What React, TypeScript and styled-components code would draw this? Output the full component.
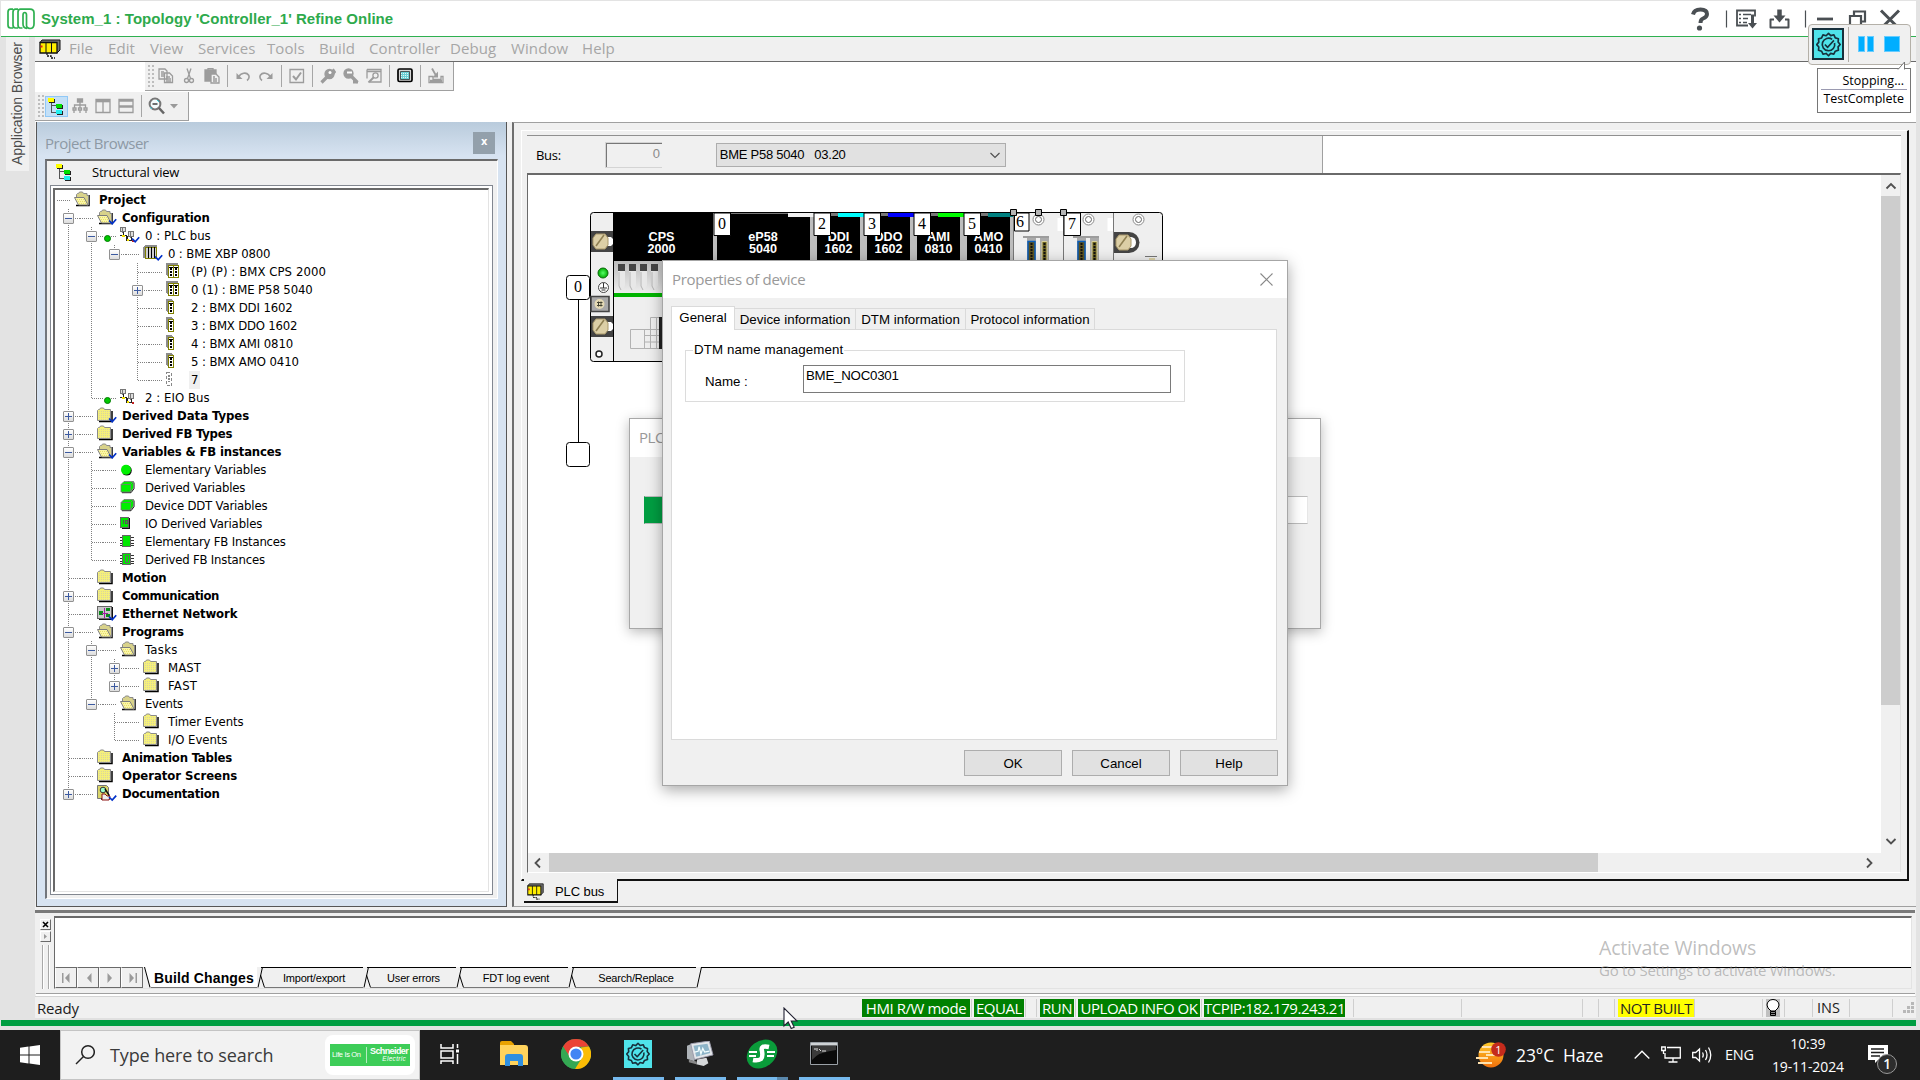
import React from "react";
import styled, { createGlobalStyle, css } from "styled-components";

const UI = `"Open Sans", "Noto Sans", sans-serif`;
const ARIAL = `"Liberation Sans", Arial, sans-serif`;
const TAHOMA = `"DejaVu Sans Condensed", "DejaVu Sans", sans-serif`;

const Global = createGlobalStyle`
  * { box-sizing: border-box; }
  html, body { margin: 0; padding: 0; overflow: hidden; background: #e3e3e3; }
  svg { display: block; flex: none; }
`;

const Screen = styled.div`
  position: relative;
  width: 1920px;
  height: 1080px;
  display: flex;
  flex-direction: column;
  background: #e3e3e3;
  font-family: ${ARIAL};
  color: #000;
  overflow: hidden;
  white-space: pre;
`;

/* ---------- title bar ---------- */
const TitleBar = styled.header`
  height: 36px;
  margin: 1px 4px 0 1px;
  display: flex;
  align-items: center;
  justify-content: space-between;
  background: #fff;
  border-bottom: 1px solid #2eb050;
  padding: 0 13px 0 6px;
  flex: none;
`;
const TitleLeft = styled.div`
  display: flex;
  align-items: center;
  gap: 6px;
`;
const TitleText = styled.h1`
  margin: 0;
  font: bold 15px/20px ${ARIAL};
  color: #2eaa4c;
  letter-spacing: 0.04px;
`;

/* ---------- frame ---------- */
const Workspace = styled.div`
  height: 983px;
  display: flex;
  flex: none;
  padding-right: 4px;
`;
const SideRail = styled.aside`
  width: 35px;
  padding-left: 6px;
  background: #e3e3e3;
  flex: none;
`;
const SideTab = styled.div`
  width: 23px;
  height: 134px;
  background: #f0f0f0;
  color: #4c4c4c;
  writing-mode: vertical-rl;
  transform: rotate(180deg);
  font: 14px/22px ${ARIAL};
  text-align: center;
  letter-spacing: -0.05px;
`;
const Body = styled.div`
  width: 1881px;
  display: flex;
  flex-direction: column;
  background: #f0f0f0;
`;
const MenuBar = styled.nav`
  height: 25px;
  display: flex;
  align-items: center;
  border-bottom: 1px solid #6a6a6a;
  background: #f0f0f0;
  padding-left: 4px;
  flex: none;
`;
const MenuItems = styled.div`
  display: flex;
  gap: 16px;
  margin-left: 8px;
  padding-bottom: 2px;
`;
const MenuItem = styled.span<{ $w: number }>`
  width: ${(p) => p.$w}px;
  font: 15px/22px ${UI};
  color: #a6a6a6;
  letter-spacing: 0.1px;
`;
const ToolArea = styled.div`
  height: 60px;
  background: #fff;
  display: flex;
  flex-direction: column;
  align-items: flex-start;
  gap: 1px;
  flex: none;
`;
const ToolBar = styled.div<{ $indent?: number; $w: number }>`
  margin-left: ${(p) => p.$indent || 0}px;
  width: ${(p) => p.$w}px;
  height: 29px;
  background: #f0f0f0;
  border-right: 1px solid #a0a0a0;
  border-bottom: 1px solid #a0a0a0;
  display: flex;
  align-items: center;
`;
const Grip = styled.i<{ $mr?: number }>`
  width: 7px;
  height: 25px;
  margin: 0 ${(p) => p.$mr ?? 0}px 0 2px;
  background-image: radial-gradient(circle, #bdbdbd 1px, transparent 1.2px);
  background-size: 4px 4px;
`;
const ToolBtn = styled.span<{ $on?: boolean }>`
  width: 23px;
  height: 21px;
  display: grid;
  place-items: center;
  ${(p) => p.$on && css`background: #c4e0f7; box-shadow: inset 0 0 0 1px #90c8f6;`}
`;
const ToolSep = styled.i`
  width: 1px;
  height: 22px;
  background: #a6a6a6;
  margin: 0 3px 0 4px;
`;
const Caret = styled.svg`
  margin-left: 2px;
`;

const Split = styled.div`
  height: 788px;
  display: flex;
  flex: none;
`;

/* ---------- project browser ---------- */
const Browser = styled.section`
  width: 471px;
  height: 785px;
  margin-left: 1px;
  border: 1px solid #565656;
  border-top: 0;
  background: linear-gradient(#b9cbdc 0, #d7e3f1 34px);
  padding: 0 8px;
  flex: none;
`;
const BrowserHead = styled.div`
  height: 37px;
  display: flex;
  align-items: center;
  justify-content: space-between;
  padding: 5px 3px 0 0;
  font: 15px/20px ${UI};
  letter-spacing: -0.5px;
  color: #8d99a5;
`;
const BrowserClose = styled.span`
  width: 22px;
  height: 22px;
  background: #93a0ab;
  color: #fff;
  font: bold 11px/19px ${TAHOMA};
  text-align: center;
  margin-top: -1px;
`;
const BrowserPanel = styled.div`
  height: 740px;
  background: #f0f0f0;
  border: 1px solid #fff;
  border-left: 2px solid #72767c;
  border-top: 2px solid #6a6a6a;
  padding: 0 4px 4px 3px;
`;
const ViewHead = styled.div`
  height: 24px;
  display: flex;
  align-items: center;
  gap: 18px;
  padding: 0 0 2px 6px;
  font: 13px/18px ${UI};
  letter-spacing: -0.2px;
`;
const TreeFrame = styled.div`
  height: 710px;
  border: 1px solid #828790;
  background: #fff;
  padding: 2px;
`;
const Tree = styled.div`
  height: 704px;
  border: 2px solid #696969;
  border-right: 1px solid #e3e3e3;
  border-bottom: 1px solid #e3e3e3;
  padding: 1px 0 0 2px;
  margin-right: 1px;
`;
const TreeRow = styled.div`
  height: 18px;
  display: flex;
  align-items: center;
`;
const dotsV = css`background-image: linear-gradient(#808080 50%, transparent 50%); background-size: 1px 2px;`;
const dotsH = css`background-image: linear-gradient(90deg, #808080 50%, transparent 50%); background-size: 2px 1px;`;
const Guide = styled.span`
  width: 23px;
  height: 18px;
  display: grid;
  grid-template: 10px 8px / 11px 1px 11px;
  flex: none;
`;
const GuideUp = styled.i`
  grid-area: 1 / 2;
  ${dotsV}
`;
const GuideDown = styled.i`
  grid-area: 2 / 2;
  ${dotsV}
`;
const GuideSide = styled.i`
  grid-area: 1 / 3;
  align-self: end;
  height: 1px;
  ${dotsH}
`;
const Expander = styled.span`
  grid-area: 1 / 1 / 3 / 4;
  width: 11px;
  height: 11px;
  margin: 4px 0 0 6px;
  border: 1px solid #919191;
  border-radius: 1px;
  background: linear-gradient(#fff, #dcdcdc);
  display: grid;
  place-items: center;
  z-index: 1;
`;
const Stub = styled.span`
  width: 17px;
  height: 18px;
  padding: 9px 3px 0 0;
  flex: none;
  display: flex;
`;
const StubLine = styled.i`
  flex: 1;
  height: 1px;
  ${dotsH}
`;
const StubDot = styled.i`
  width: 7px;
  height: 7px;
  margin: -1px 0 0 1px;
  border-radius: 50%;
  background: #00c800;
  border: 1px solid #007a00;
  flex: none;
`;
const TreeIcon = styled.span`
  width: 22px;
  height: 18px;
  flex: none;
`;
const TreeLabel = styled.span<{ $bold?: boolean; $sel?: boolean; $ls?: number }>`
  font: ${(p) => (p.$bold ? "bold 13px" : "13px")} / 18px ${TAHOMA};
  letter-spacing: ${(p) => p.$ls ?? (p.$bold ? -0.22 : -0.2)}px;
  margin-left: 1px;
  padding: 0 2px;
  ${(p) => p.$sel && css`background: #f0f0f0;`}
`;

/* ---------- editor ---------- */
const Main = styled.section`
  width: 1404px;
  height: 785px;
  margin-left: 5px;
  border-left: 2px solid #6e6e6e;
  border-top: 1px solid #a0a0a0;
  border-bottom: 1px solid #a0a0a0;
  padding: 7px 7px 0 7px;
`;
const Editor = styled.div`
  height: 751px;
  border-left: 1px solid #fff;
  border-top: 1px solid #fff;
  border-right: 2px solid #111;
  border-bottom: 2px solid #111;
  padding: 4px 6px 5px 5px;
`;
const BusRow = styled.div`
  height: 38px;
  display: flex;
  border-top: 1px solid #909090;
  background: #fff;
`;
const BusForm = styled.div`
  width: 796px;
  background: #f0f0f0;
  border-right: 1px solid #a0a0a0;
  display: flex;
  align-items: center;
  padding-left: 9px;
  font: 13px/18px ${UI};
  letter-spacing: -0.3px;
`;
const BusNumber = styled.div`
  width: 57px;
  height: 26px;
  margin-left: 44px;
  border: 1px solid #d4d4d4;
  border-right: 0;
  box-shadow: inset 1px 1px 0 #777;
  text-align: right;
  padding: 2px 2px 0 0;
  font: 13px/18px ${ARIAL};
  color: #8a8a8a;
`;
const Select = styled.div`
  width: 290px;
  height: 24px;
  margin-left: 54px;
  border: 1px solid #adadad;
  background: #e1e1e1;
  display: flex;
  align-items: center;
  justify-content: space-between;
  padding: 0 4px 0 3px;
  font: 13px/18px ${ARIAL};
  letter-spacing: -0.25px;
`;
const CanvasGrid = styled.div`
  height: 700px;
  display: grid;
  grid-template: 1fr 19px / 1fr 19px;
  border-left: 1px solid #6a6a6a;
  border-top: 2px solid #6a6a6a;
  border-right: 1px solid #e3e3e3;
  border-bottom: 1px solid #fff;
  background: #f0f0f0;
`;
const Canvas = styled.div`
  background: #fff;
  position: relative;
  overflow: hidden;
`;
const RackSvg = styled.svg`
  position: absolute;
  left: 32px;
  top: 30px;
`;
const VBar = styled.div`
  display: flex;
  flex-direction: column;
  align-items: center;
  justify-content: space-between;
  padding: 5px 0 6px;
`;
const VThumb = styled.i`
  width: 19px;
  height: 509px;
  background: #cdcdcd;
  margin: 4px 0 auto;
`;
const HBar = styled.div`
  display: flex;
  align-items: center;
  justify-content: space-between;
  padding: 0 6px 0 4px;
`;
const HThumb = styled.i`
  width: 1049px;
  height: 19px;
  background: #cdcdcd;
  margin: 0 auto 0 5px;
`;
const SheetTab = styled.div`
  width: 94px;
  height: 24px;
  margin: -2px 0 0 3px;
  background: #f0f0f0;
  border-right: 1px solid #111;
  border-bottom: 2px solid #111;
  display: flex;
  align-items: center;
  gap: 11px;
  padding: 3px 0 0 3px;
  font: 13px/18px ${ARIAL};
  letter-spacing: -0.1px;
`;

/* ---------- output ---------- */
const Output = styled.section`
  height: 86px;
  border-top: 3px solid #7a7a7a;
  display: flex;
  padding: 3px 3px 0 0;
  margin-right: 1px;
  flex: none;
`;
const OutputRail = styled.div`
  width: 19px;
  padding: 3px 0 0 5px;
  display: flex;
  flex-direction: column;
  gap: 1px;
  flex: none;
`;
const TinyBtn = styled.span`
  width: 11px;
  height: 11px;
  border: 1px solid #fff;
  border-right-color: #6a6a6a;
  border-bottom-color: #6a6a6a;
  display: grid;
  place-items: center;
`;
const RailGrip = styled.i`
  width: 7px;
  height: 44px;
  margin: 2px 0 0 2px;
  border: solid #a8a8a8;
  border-width: 0 1px;
  box-shadow: inset 1px 0 0 #fff, 1px 0 0 #fff;
`;
const OutputMain = styled.div`
  flex: 1;
  height: 73px;
  border-left: 1px solid #6a6a6a;
  border-top: 2px solid #6a6a6a;
  border-right: 1px solid #e3e3e3;
  border-bottom: 1px solid #e3e3e3;
  background: #f0f0f0;
`;
const OutputText = styled.div`
  height: 49px;
  background: #fff;
`;
const OutputTabs = styled.div`
  display: flex;
  height: 21px;
`;
const NavBtn = styled.span`
  width: 22px;
  height: 21px;
  border: 1px solid #fff;
  border-right-color: #6a6a6a;
  border-bottom-color: #6a6a6a;
  border-top-color: #6a6a6a;
  display: grid;
  place-items: center;
`;
const TabStrip = styled.div`
  flex: 1;
  display: flex;
`;
const TabsFill = styled.i`
  flex: 1;
  border-top: 1px solid #000;
`;
const OutTab = styled.span<{ $w: number; $on?: boolean }>`
  width: ${(p) => p.$w}px;
  height: 21px;
  text-align: center;
  border-top: 1px solid ${(p) => (p.$on ? "#fff" : "#000")};
  border-bottom: 1px solid #777;
  background: ${(p) => (p.$on ? "#fff" : "#f0f0f0")};
  font: ${(p) => (p.$on ? "bold 14px" : "11px")} / 20px ${ARIAL};
  letter-spacing: ${(p) => (p.$on ? 0.14 : -0.2)}px;
`;

/* ---------- status bar ---------- */
const StatusBar = styled.footer`
  height: 24px;
  border-top: 1px solid #d4d4d4;
  border-bottom: 2px solid #e0e0e0;
  box-shadow: 0 -3px 0 -1px #fff, 0 -4px 0 -1px #a0a0a0;
  display: flex;
  align-items: center;
  padding-left: 2px;
  font: 15px/18px ${UI};
  color: #1c1c1c;
  flex: none;
`;
const Ready = styled.span`
  width: 825px;
  letter-spacing: -0.2px;
`;
const Flag = styled.span<{ $w: number; $yellow?: boolean }>`
  width: ${(p) => p.$w}px;
  height: 18px;
  background: ${(p) => (p.$yellow ? "#ffff00" : "#008000")};
  color: ${(p) => (p.$yellow ? "#222" : "#fff")};
  text-align: center;
  letter-spacing: -0.45px;
  overflow: hidden;
  flex: none;
`;
const Tick = styled.i<{ $l: number; $r: number }>`
  width: 1px;
  height: 18px;
  margin: 0 ${(p) => p.$r}px 0 ${(p) => p.$l}px;
  background: #cfcfcf;
  flex: none;
`;
const InsLabel = styled.span`
  width: 25px;
  font-size: 14.5px;
`;
const GreenStrip = styled.div`
  height: 6px;
  margin: 0 4px 4px 1px;
  background: #009e42;
  flex: none;
`;

/* ---------- taskbar ---------- */
const Taskbar = styled.div`
  height: 50px;
  background: #1e1e1e;
  display: flex;
  color: #fff;
  flex: none;
`;
const StartCell = styled.div`
  width: 60px;
  display: grid;
  place-items: center;
`;
const Search = styled.div`
  width: 360px;
  background: #f2f2f2;
  border: 1px solid #c4c4c4;
  display: flex;
  align-items: center;
  padding: 0 4px 0 14px;
  color: #3a3a3a;
  font: 18px/24px ${UI};
  letter-spacing: -0.12px;
`;
const SearchText = styled.span`
  width: 215px;
  margin-left: 15px;
`;
const Brand = styled.div`
  width: 90px;
  height: 40px;
  border-radius: 8px;
  background: #fff;
  display: grid;
  place-items: center;
`;
const BrandGreen = styled.div`
  width: 80px;
  height: 22px;
  background: #3dcd58;
  color: #fff;
  display: grid;
  grid-template-columns: 34px 1fr;
  align-items: center;
  font: 7.5px/10px ${ARIAL};
  letter-spacing: -0.35px;
  padding-left: 2px;
`;
const BrandName = styled.b`
  border-left: 1px solid #b6ecc0;
  padding-left: 3px;
  height: 16px;
  font: bold 9px/9px ${ARIAL};
  letter-spacing: -0.6px;
`;
const BrandSub = styled.small`
  display: block;
  font: italic 6.5px/6px ${ARIAL};
  letter-spacing: 0.3px;
  text-align: right;
  padding-right: 4px;
`;
const Apps = styled.div`
  display: flex;
  width: 1056px;
`;
const AppCell = styled.div<{ $w?: number; $shift?: number }>`
  width: ${(p) => p.$w ?? 62}px;
  margin-left: ${(p) => p.$shift ?? 0}px;
  display: grid;
  grid-template-rows: 47px 3px;
  place-items: center;
`;
const Underline = styled.i<{ $split?: boolean }>`
  width: 51px;
  height: 3px;
  background: ${(p) => (p.$split ? "linear-gradient(90deg, #76b9ed 40px, #5a88ac 40px)" : "#76b9ed")};
`;
const Tray = styled.div`
  display: flex;
  align-items: center;
  flex: 1;
  padding-bottom: 1px;
  font: 17.5px/24px ${UI};
`;
const Temp = styled.span`
  margin-left: 10px;
  width: 118px;
  letter-spacing: -0.1px;
`;
const TrayIcons = styled.div`
  display: flex;
  align-items: center;
  gap: 11px;
`;
const Lang = styled.span`
  font-size: 14.5px;
  margin-left: 12px;
  letter-spacing: -0.2px;
`;
const Clock = styled.div`
  width: 100px;
  margin: 0 9px 0 4px;
  text-align: center;
  font: 14px/23px ${UI};
  letter-spacing: -0.1px;
`;
const Bell = styled.svg`
  margin-top: 9px;
`;

/* ---------- overlays ---------- */
const Recorder = styled.div`
  position: absolute;
  left: 1808px;
  top: 24px;
  width: 103px;
  height: 41px;
  border: 1px solid #b4b0a8;
  border-radius: 4px;
  background: #f0f0f0;
  display: flex;
  align-items: center;
  padding: 0 10px 1px 3px;
`;
const RecorderIcon = styled.div`
  width: 32px;
  height: 32px;
  border: 2px solid #17303c;
  background: #4fe3ea;
  display: grid;
  place-items: center;
`;
const RecorderSep = styled.i`
  width: 1px;
  height: 35px;
  background: #b0aca6;
  margin: 0 9px 0 4px;
`;
const Block = styled.i<{ $w: number; $ml?: number }>`
  width: ${(p) => p.$w}px;
  height: 16px;
  background: #00aeff;
  box-shadow: inset 0 0 0 1px #66ccff;
  margin-left: ${(p) => p.$ml || 0}px;
`;
const Balloon = styled.div`
  position: absolute;
  left: 1817px;
  top: 68px;
  width: 94px;
  height: 45px;
  border: 1px solid #767676;
  background: #fff;
  padding: 3px 3px;
  font: 12.5px/17px ${UI};
  text-align: right;
`;
const BalloonLine = styled.div<{ $top?: boolean }>`
  padding-right: 3px;
  height: 18px;
  border-bottom: ${(p) => (p.$top ? "1px solid #9a9ab0" : "0")};
`;
const BalloonTail = styled.svg`
  position: absolute;
  right: 4px;
  top: -7px;
`;

const Progress = styled.div`
  position: absolute;
  left: 629px;
  top: 418px;
  width: 692px;
  height: 211px;
  border: 1px solid #a8a8a8;
  background: #f0f0f0;
  box-shadow: 0 3px 12px rgba(0, 0, 0, 0.28);
`;
const ProgressTitle = styled.div`
  height: 38px;
  background: #fff;
  padding-left: 9px;
  font: 15px/36px ${UI};
  letter-spacing: -0.4px;
  color: #999;
`;
const Meter = styled.div`
  margin: 39px 12px 0 14px;
  height: 28px;
  border: 1px solid #bcbcbc;
  border-left-color: #009e42;
  border-right-color: #e6e6e6;
  background: #fff;
`;
const MeterFill = styled.i`
  display: block;
  height: 26px;
  width: 60%;
  background: #009e42;
`;
const Dialog = styled.div`
  position: absolute;
  left: 662px;
  top: 260px;
  width: 626px;
  height: 526px;
  border: 1px solid #a6a6a6;
  background: #f0f0f0;
  box-shadow: 0 4px 14px rgba(0, 0, 0, 0.34);
  font: 13.3px/18px ${ARIAL};
  letter-spacing: -0.02px;
`;
const DialogTitle = styled.div`
  height: 37px;
  background: #fff;
  display: flex;
  align-items: center;
  justify-content: space-between;
  padding: 0 14px 1px 9px;
  font: 15px/20px ${UI};
  letter-spacing: -0.28px;
  color: #999;
`;
const DialogTabs = styled.div`
  display: flex;
  align-items: flex-end;
  height: 31px;
  padding-left: 8px;
`;
const DialogTab = styled.span<{ $w: number; $on?: boolean; $ls?: number }>`
  width: ${(p) => p.$w}px;
  height: ${(p) => (p.$on ? 24 : 21)}px;
  border: 1px solid #dadada;
  border-left-width: ${(p) => (p.$on ? 1 : 0)}px;
  border-bottom: 0;
  margin-bottom: ${(p) => (p.$on ? -1 : 0)}px;
  background: ${(p) => (p.$on ? "#fff" : "#f0f0f0")};
  text-align: center;
  line-height: 22px;
  letter-spacing: ${(p) => p.$ls ?? 0}px;
  z-index: 1;
`;
const DialogPage = styled.div`
  width: 606px;
  height: 411px;
  margin-left: 8px;
  border: 1px solid #dadada;
  background: #fff;
  padding: 11px 0 0 13px;
`;
const Group = styled.fieldset`
  width: 500px;
  height: 61px;
  margin: 0;
  padding: 6px 12px 0 19px;
  border: 1px solid #dcdcdc;
  display: flex;
`;
const Legend = styled.legend`
  margin-left: -12px;
  padding: 0 1px;
  line-height: 18px;
  letter-spacing: 0.12px;
`;
const FieldLabel = styled.span`
  width: 98px;
  line-height: 34px;
`;
const Field = styled.div`
  width: 368px;
  height: 28px;
  border: 1px solid #7a7a7a;
  padding: 1px 2px;
  letter-spacing: -0.25px;
`;
const DialogButtons = styled.div`
  display: flex;
  justify-content: flex-end;
  gap: 10px;
  padding: 10px 9px 0 0;
`;
const Button = styled.button`
  width: 98px;
  height: 26px;
  border: 1px solid #adadad;
  background: #e1e1e1;
  font: 13.3px/20px ${ARIAL};
  color: #000;
  padding: 1px 0 0;
`;
const Watermark = styled.div`
  position: absolute;
  left: 1599px;
  top: 933px;
  color: rgba(150, 150, 150, 0.62);
  font: 15px/15px ${UI};
  letter-spacing: -0.27px;
`;
const WatermarkTitle = styled.div`
  font: 19.5px/30px ${UI};
  letter-spacing: -0.18px;
`;
const Pointer = styled.svg`
  position: absolute;
  left: 783px;
  top: 1007px;
`;

/* ---------- icons ---------- */
const BlueTick = () => <path d="M12 11.500l3.200 3.200 4-4.400" stroke="#0030c8" strokeWidth="1.700" fill="none" shapeRendering="auto" />;
const Folder = ({ open, check }: { open?: boolean; check?: boolean }) => (
  <svg width="20" height="16" viewBox="0 0 20 16">
    <path d="M2 14.500h13V4" stroke="#000" fill="none" strokeWidth="1.500" />
    {open ? (
      <>
        <path d="M2.500 9V3.500l1-1h1l1-1.500h3l1 1.500h3.500v2h1.500v9.500h-1z" fill="#d8d28a" stroke="#8a8a8a" />
        <path d="M.500 6.500h9.500l4 7.500H4.500z" fill="#fbf6a6" stroke="#7d7d7d" />
        <path d="M3 8.500h7M4 10.500h7M5 12.500h7" stroke="#e6de6a" strokeDasharray="1 1" shapeRendering="crispEdges" />
      </>
    ) : (
      <>
        <path d="M.500 13.500v-10l1-1h1l1-1.500h3l1 1.500h6v11z" fill="#f5f07a" stroke="#8a8a8a" />
        <path d="M2 4.500h11M2 6.500h11M2 8.500h11M2 10.500h11M2 12.500h11" stroke="#d9d4a0" strokeDasharray="1 1" shapeRendering="crispEdges" />
      </>
    )}
    {check && <BlueTick />}
  </svg>
);
const Bus = ({ check }: { check?: boolean }) => (
  <svg width="20" height="16" viewBox="0 0 20 16" shapeRendering="crispEdges">
    <path d="M.500.500h5v4h-5zM8.500 4.500h5v5h-5z" fill="#ddd" stroke="#777" />
    <path d="M2.500 1v5M10.500 5v6" stroke="#777" />
    <path d="M0 8.500h6v5h8M3.500 5v4M11.500 10v4M7.500 9v4" stroke="#222" fill="none" />
    <path d="M2 8h3v2H2zM7 12h2v2H7z" fill="#f5e400" />
    <path d="M12 13h2v2h-2z" fill="#c02020" />
    {check && <BlueTick />}
  </svg>
);
const Rack = () => (
  <svg width="20" height="16" viewBox="0 0 20 16" shapeRendering="crispEdges">
    <path d="M0 2l2-2h12v13H0z" fill="#8c8c8c" />
    <path d="M2.500 2.500h11v11h-11z" fill="#cfcfcf" stroke="#808000" />
    <path d="M5.500 2v11M8.500 2v11M11.500 2v11" stroke="#000" strokeWidth="1.300" />
    <BlueTick />
  </svg>
);
const Module = ({ two }: { two?: boolean }) => (
  <svg width="14" height="16" viewBox="0 0 14 16" shapeRendering="crispEdges">
    <path d="M0 0h6l2 3H2v11L0 12z" fill="#8c8c8c" />
    {two && <path d="M6 0h6l1 3H6z" fill="#8c8c8c" />}
    <path d="M2.500 2.500h5v12h-5z" fill="#fff" stroke="#808000" />
    <path d="M3 4h4v1H3z" fill="#000" />
    <path d="M5 5v8" stroke="#000" strokeWidth="2" strokeDasharray="2 1" />
    {two && (
      <>
        <path d="M7.500 2.500h5v12h-5z" fill="#fff" stroke="#808000" />
        <path d="M8 4h4v1H8z" fill="#000" />
        <path d="M10 5v8" stroke="#000" strokeWidth="2" strokeDasharray="2 1" />
      </>
    )}
  </svg>
);
const Empty = () => (
  <svg width="8" height="16" viewBox="0 0 8 16" shapeRendering="crispEdges">
    <path d="M.500 1.500h5v13h-5z" fill="none" stroke="#888" strokeDasharray="3 2" />
    <path d="M3 4v7" stroke="#888" strokeDasharray="2 1" strokeWidth="2" />
  </svg>
);
const Ball = () => (
  <svg width="14" height="16" viewBox="0 0 14 16">
    <circle cx="6.800" cy="9.600" r="5" fill="#111" />
    <circle cx="6" cy="8.800" r="5" fill="#00f000" />
  </svg>
);
const Cube = () => (
  <svg width="16" height="16" viewBox="0 0 16 16">
    <path d="M2 13.700h9l3-4V3.500" stroke="#111" fill="none" />
    <path d="M1 5.500L4 2.500h9.500v6.500l-3 4H1z" fill="#00f000" stroke="#777" strokeWidth=".8" />
    <path d="M1 5.500h9.500V13M10.500 5.500l3-3" stroke="#777" strokeWidth=".8" fill="none" />
  </svg>
);
const IoBlock = () => (
  <svg width="14" height="16" viewBox="0 0 14 16" shapeRendering="crispEdges">
    <path d="M2 3h8v11H2z" fill="#111" />
    <path d="M.500 2.500h8v10h-8z" fill="#00e800" stroke="#666" />
    <path d="M3 5v4M5.500 5.500h2v3h-2z" stroke="#555" fill="none" />
  </svg>
);
const Chip = ({ inner }: { inner?: boolean }) => (
  <svg width="14" height="16" viewBox="0 0 14 16" shapeRendering="crispEdges">
    <path d="M0 4.500h14M0 7.500h14M0 10.500h14M0 12.500h14" stroke="#333" />
    <path d="M2.500 2.500h8v11h-8z" fill="#00e800" stroke="#666" />
    {inner && <path d="M5.500 4.500h3v7h-3z" fill="none" stroke="#666" />}
  </svg>
);
const Network = () => (
  <svg width="20" height="16" viewBox="0 0 20 16" shapeRendering="crispEdges">
    <path d="M2 2h14v13H2z" fill="#111" />
    <path d="M.500 1.500h14v12h-14z" fill="#c9c9c9" stroke="#666" />
    <path d="M2 6h4v4H2zM9 3h4v3H9zM9 9h4v3H9z" fill="#0a8a1a" />
    <path d="M7.500 3v10M5 8h6" stroke="#a020a0" />
    <BlueTick />
  </svg>
);
const Doc = () => (
  <svg width="20" height="17" viewBox="0 0 20 17">
    <path d="M.500.500h9l2 2v11H.500z" fill="#d9d56a" stroke="#777" />
    <circle cx="6" cy="5" r="2.800" fill="#9fc" stroke="#333" />
    <path d="M8 4l4 6v4H4" stroke="#111" fill="none" strokeWidth="1.400" />
    <path d="M5 9h3l2 2h3l-1 4H5z" fill="#eee" stroke="#8c1010" />
    <path d="M12 12l3.200 3 4-4.400" stroke="#0030c8" strokeWidth="1.700" fill="none" />
  </svg>
);
const PlcIcon = ({ w = 22, h = 20 }: { w?: number; h?: number }) => (
  <svg width={w} height={h} viewBox="0 0 22 20" preserveAspectRatio="none">
    <path d="M1 3.500L3 1h18v10l-3 3z" fill="#777" stroke="#111" />
    <path d="M1 3.500h17V14H1z" fill="#ffee00" stroke="#111" strokeWidth="1.300" />
    <path d="M7 3.500V14M12.500 3.500V14" stroke="#111" />
    <path d="M1.500 6.500h2v2h-2z" fill="#e02020" />
    <path d="M8 14v3h4v2h4" stroke="#111" fill="none" strokeWidth="1.300" strokeDasharray="2 1" />
  </svg>
);
const Hier = () => (
  <svg width="18" height="18" viewBox="0 0 18 18" shapeRendering="crispEdges">
    <path d="M3.500 5v10h6M4 8.500h6" stroke="#555" fill="none" />
    <path d="M1 2h6v4H1z" fill="#222" />
    <path d="M0 1h6v4H0z" fill="#ff0" />
    <path d="M9 8h6v4H9z" fill="#222" />
    <path d="M8 7h6v4H8z" fill="#0d0" />
    <path d="M9 14h6v4H9z" fill="#222" />
    <path d="M8 13h6v4H8z" fill="#2ee" />
  </svg>
);
const Gear = ({ s, c = "#17303c" }: { s: number; c?: string }) => (
  <svg width={s} height={s} viewBox="0 0 24 24" fill="none" stroke={c} strokeWidth="1.600" strokeLinejoin="round">
    <path d="M12 1.500l2.200 2.200 3-.8 1.300 2.900 3 .9-.3 3.100 2 2.400-2 2.300.3 3.100-3 1-1.400 2.800-3-.7L12 23l-2.300-2.200-3 .7-1.300-2.800-3-1 .3-3.100-2-2.300 2-2.400-.3-3.100 3-.9 1.300-2.900 3 .8z" transform="translate(0 -.2)" />
    <path d="M17.800 10.500a6 6 0 1 1-2.300-3.400" />
    <path d="M8.500 12l2.700 2.700 6-6.700" />
  </svg>
);
const G = "#9c9c9c";
const gi = (children: React.ReactNode) => (
  <svg width="16" height="16" viewBox="0 0 16 16" fill="none" stroke={G} strokeWidth="1.300">{children}</svg>
);
const iconCopy = gi(<><path d="M1 1h6l2 2v8H1zM6.500 5h5l3 3v6.500h-8z" fill="#f0f0f0" /><path d="M3 4h3M3 6h3M3 8h3M8 9h4M8 11h5M8 13h5" /></>);
const iconCut = gi(<><path d="M6 .500l3.500 10M10 .500L6.500 10.500" /><circle cx="5.500" cy="12.500" r="2" /><circle cx="10.500" cy="12.500" r="2" /></>);
const iconPaste = gi(<><path d="M1 2h11v11H1z" fill={G} /><path d="M4 .700h5v2H4z" /><path d="M7 6h5l3 3v6H7z" fill="#f0f0f0" /><path d="M9 9h2M9 11h4M9 13h4" /></>);
const iconUndo = gi(<><path d="M1.500 5v6h6z" fill={G} stroke="none" /><path d="M3.500 9c2.500-4.500 8-5 10-2 1.200 2.200.5 4-1.500 5.500" strokeWidth="1.600" /></>);
const iconRedo = gi(<><path d="M14.500 5v6h-6z" fill={G} stroke="none" /><path d="M12.500 9c-2.500-4.500-8-5-10-2-1.200 2.200-.5 4 1.500 5.500" strokeWidth="1.600" /></>);
const iconCheck = gi(<><path d="M1 1.500h13.500v13H1z" /><path d="M4 8l3 3.500L12 4.500" strokeWidth="2" /></>);
const iconFind = gi(<><circle cx="9.500" cy="6" r="4.500" fill={G} /><path d="M13 1l2 3-3 4" fill={G} strokeWidth="2" /><path d="M7 9l-5.500 5.500" strokeWidth="3.200" /><circle cx="10" cy="4.500" r="1.500" fill="#fff" stroke="none" /></>);
const iconFindNext = gi(<><circle cx="5.500" cy="5.500" r="4.500" fill={G} /><path d="M7 7l7.500 7.500M10 14h5" strokeWidth="3.200" /><path d="M4 4.500h5" stroke="#fff" strokeWidth="2" /></>);
const iconFindIn = gi(<><path d="M1 1.500h14v12.500H4M1 1.500v9M1 3.500h14" /><circle cx="9.500" cy="7.500" r="2.600" /><path d="M7.500 9.500l-5 5" strokeWidth="2" /></>);
const iconScreen = (
  <svg width="16" height="16" viewBox="0 0 16 16">
    <rect x="1" y="1" width="14" height="12.500" rx="1.500" fill="#d8d8d8" stroke="#000" strokeWidth="1.700" />
    <path d="M3.500 3.500h9v8h-9z" fill="#6ccfd4" stroke="#333" strokeWidth=".8" />
    <path d="M4 5.500h8M4 7.500h8M4 9.500h8" stroke="#fff" strokeWidth=".8" strokeDasharray="1 1" />
  </svg>
);
const iconDown = gi(<><path d="M1 8.500h4v3h8v-3h2v6H1z" /><path d="M2 13h12" strokeWidth="2.400" /><path d="M4 .500l4 7" strokeWidth="1.800" /><path d="M10 3.500v6H4.500z" fill={G} stroke="none" /></>);
const iconTree = gi(<><path d="M5.500 1h5v3h-5z" fill={G} /><path d="M8 4v3M2.500 10V7h11v3M8 7v3M1 10h3v2H1zM6.500 10h3v2h-3zM12 10h3v2h-3zM2 12v3M8 12v3M14 12v3" /></>);
const iconCols = gi(<><path d="M1 1.500h14v13H1zM8 3v11" /><path d="M1 3h14" strokeWidth="2.600" /></>);
const iconRows = gi(<><path d="M1 1.500h14v13H1z" /><path d="M1 2.500h14M1 8.500h14" strokeWidth="2.600" /></>);
const iconZoom = (
  <svg width="18" height="18" viewBox="0 0 18 18" fill="none">
    <circle cx="7" cy="7" r="5.400" fill="#f4fdfd" stroke="#777" strokeWidth="2" />
    <path d="M4.500 7h5" stroke="#333" strokeWidth="1.400" />
    <path d="M11 11l5 5.500" stroke="#666" strokeWidth="2.600" />
    <path d="M2 10l2 2M9 3l2 2" stroke="#3cd" />
  </svg>
);
const Chev = ({ d, s = 12, c = "#505050", w = 1.8 }: { d: string; s?: number; c?: string; w?: number }) => (
  <svg width={s} height={s} viewBox="0 0 12 12" fill="none" stroke={c} strokeWidth={w}><path d={d} /></svg>
);

/* ---------- tree ---------- */
type Node = { l: number; t: string; i: React.ReactNode; e?: "+" | "-"; b?: boolean; dot?: boolean; sel?: boolean; ls?: number };
const nodes: Node[] = [
  { l: 0, t: "Project", i: <Folder open />, b: true, ls: 0 },
  { l: 1, t: "Configuration", i: <Folder open check />, e: "-", b: true },
  { l: 2, t: "0 : PLC bus", i: <Bus check />, e: "-", dot: true, ls: 0.05 },
  { l: 3, t: "0 : BME XBP 0800", i: <Rack />, e: "-", ls: -0.14 },
  { l: 4, t: "(P) (P) : BMX CPS 2000", i: <Module two />, ls: 0.07 },
  { l: 4, t: "0 (1) : BME P58 5040", i: <Module two />, e: "+", ls: -0.1 },
  { l: 4, t: "2 : BMX DDI 1602", i: <Module />, ls: -0.12 },
  { l: 4, t: "3 : BMX DDO 1602", i: <Module />, ls: -0.19 },
  { l: 4, t: "4 : BMX AMI 0810", i: <Module />, ls: -0.1 },
  { l: 4, t: "5 : BMX AMO 0410", i: <Module />, ls: -0.1 },
  { l: 4, t: "7", i: <Empty />, sel: true },
  { l: 2, t: "2 : EIO Bus", i: <Bus />, dot: true, ls: 0.05 },
  { l: 1, t: "Derived Data Types", i: <Folder check />, e: "+", b: true, ls: -0.04 },
  { l: 1, t: "Derived FB Types", i: <Folder />, e: "+", b: true, ls: -0.22 },
  { l: 1, t: "Variables & FB instances", i: <Folder open check />, e: "-", b: true, ls: -0.17 },
  { l: 2, t: "Elementary Variables", i: <Ball />, ls: -0.16 },
  { l: 2, t: "Derived Variables", i: <Cube />, ls: -0.15 },
  { l: 2, t: "Device DDT Variables", i: <Cube />, ls: -0.18 },
  { l: 2, t: "IO Derived Variables", i: <IoBlock />, ls: -0.1 },
  { l: 2, t: "Elementary FB Instances", i: <Chip /> },
  { l: 2, t: "Derived FB Instances", i: <Chip inner /> },
  { l: 1, t: "Motion", i: <Folder />, b: true },
  { l: 1, t: "Communication", i: <Folder />, e: "+", b: true, ls: -0.42 },
  { l: 1, t: "Ethernet Network", i: <Network />, b: true, ls: -0.12 },
  { l: 1, t: "Programs", i: <Folder open />, e: "-", b: true },
  { l: 2, t: "Tasks", i: <Folder open />, e: "-", ls: 0.3 },
  { l: 3, t: "MAST", i: <Folder />, e: "+", ls: 0.1 },
  { l: 3, t: "FAST", i: <Folder />, e: "+", ls: 0.3 },
  { l: 2, t: "Events", i: <Folder open />, e: "-", ls: -0.3 },
  { l: 3, t: "Timer Events", i: <Folder />, ls: -0.1 },
  { l: 3, t: "I/O Events", i: <Folder />, ls: -0.05 },
  { l: 1, t: "Animation Tables", i: <Folder />, b: true, ls: -0.18 },
  { l: 1, t: "Operator Screens", i: <Folder />, b: true, ls: -0.03 },
  { l: 1, t: "Documentation", i: <Doc />, e: "+", b: true, ls: -0.25 },
];
const continues = (i: number, level: number) => {
  for (let j = i + 1; j < nodes.length; j++) {
    if (nodes[j].l < level) return false;
    if (nodes[j].l === level) return true;
  }
  return false;
};
const ProjectTree = () => (
  <Tree>
    {nodes.map((n, i) => (
      <TreeRow key={i}>
        {Array.from({ length: n.l }, (_, k) => {
          const own = k + 1 === n.l;
          const more = continues(i, k + 1);
          return (
            <Guide key={k}>
              {(own || more) && <GuideUp />}
              {more && <GuideDown />}
              {own && <GuideSide />}
              {own && n.e && (
                <Expander>
                  <svg width="7" height="7" viewBox="0 0 7 7" shapeRendering="crispEdges">
                    <path d={n.e === "+" ? "M0 3.500h7M3.500 0v7" : "M0 3.500h7"} stroke="#3c5aa0" />
                  </svg>
                </Expander>
              )}
            </Guide>
          );
        })}
        <Stub>{n.dot && <StubDot />}<StubLine /></Stub>
        <TreeIcon>{n.i}</TreeIcon>
        <TreeLabel $bold={n.b} $sel={n.sel} $ls={n.ls}>{n.t}</TreeLabel>
      </TreeRow>
    ))}
  </Tree>
);

/* ---------- rack drawing ---------- */
const Screw = ({ x, y, flip }: { x: number; y: number; flip?: boolean }) => (
  <g transform={`translate(${x} ${y})`}>
    {flip ? (
      <>
        <path d="M0 0h15a10.500 10.500 0 0 1 0 21H0z" fill="#444" />
        <path d="M14 5h3a5 5.500 0 0 1 0 11h-3z" fill="#fff" />
      </>
    ) : (
      <>
        <path d="M0 0h22v21H0z" fill="#444" />
        <path d="M15 6h5l2 2v5l-2 2h-5z" fill="#fff" />
      </>
    )}
    <path d="M5 3h9l3 4v7l-3 4H5l-3-4V7z" fill="#dccfa6" stroke="#a8976a" />
    <path d="M5 15L13 4" stroke="#8f8053" strokeWidth="1.600" />
  </g>
);
const modules = [
  { x: 614, w: 99, a: "CPS", b: "2000", cx: 661.5 },
  { x: 717, w: 93, a: "eP58", b: "5040", cx: 763, n: "0", nx: 714, c: "#f0f0f0" },
  { x: 817, w: 43, a: "DDI", b: "1602", cx: 838.5, n: "2", nx: 814, c: "#00ffff" },
  { x: 867, w: 43, a: "DDO", b: "1602", cx: 888.5, n: "3", nx: 864, c: "#0000ff" },
  { x: 917, w: 43, a: "AMI", b: "0810", cx: 938.5, n: "4", nx: 914, c: "#00ff00" },
  { x: 967, w: 43, a: "AMO", b: "0410", cx: 988.5, n: "5", nx: 964, c: "#008080" },
];
const RackDrawing = () => (
  <RackSvg width="610" height="270" viewBox="560 205 610 270">
    <defs>
      <linearGradient id="fade" x1="0" x2="0" y1="0" y2="1">
        <stop offset="0" stopColor="#bbb" />
        <stop offset="1" stopColor="#f2f2f2" />
      </linearGradient>
      <radialGradient id="led"><stop offset="0" stopColor="#5f6" /><stop offset="1" stopColor="#0a0" /></radialGradient>
    </defs>
    <rect x="590.500" y="212.500" width="572" height="149" rx="3" fill="#efefef" stroke="#000" />
    <path d="M614 261h49v35h-49z" fill="url(#fade)" />
    <path d="M614 213h399v48H614z" fill="#bdbdbd" />
    <path d="M613.500 213v148" stroke="#000" />
    <Screw x={591} y={231} />
    <Screw x={591} y={316} />
    <circle cx="603" cy="273" r="5" fill="url(#led)" stroke="#086b08" />
    <circle cx="603.500" cy="287.500" r="5" fill="#fff" stroke="#444" />
    <path d="M603.500 283v5M600 288h7M601.500 290h4" stroke="#333" fill="none" />
    <path d="M591 296.500h18v15h-18z" fill="#a8a8a8" stroke="#444" strokeWidth="1.600" />
    <circle cx="599.500" cy="304" r="5" fill="#e5dab5" />
    <path d="M597 302.500h5.500M597 305.500h5.500M598.500 301.500v5M601 301.500v5" stroke="#443" />
    <circle cx="599" cy="354" r="3" fill="#fff" stroke="#222" strokeWidth="1.500" />
    {[618, 629, 640, 651].map((x) => (
      <g key={x}>
        <path d={`M${x} 264h7v7h-7z`} fill="#444" />
        <path d={`M${x} 271h7v14l-2 5h-2l-3-5z`} fill="#e8e8e8" />
        <path d={`M${x + 1} 272v14l2 4`} stroke="#b4b4b4" fill="none" />
      </g>
    ))}
    <path d="M614 293h49v4h-49z" fill="#00b400" />
    <path d="M630.500 329.500h32M630.500 329.500v19h32M644.500 329v19M650.500 317.500h12M650.500 317.500v31M656.500 317v31M644 335.500h18M644 342h18" stroke="#b2b2b2" fill="none" />
    <path d="M659 317h4v32h-4z" fill="#222" />
    {modules.map((m) => (
      <g key={m.x}>
        <path d={`M${m.x} 213h${m.w}v48h-${m.w}z`} fill="#000" />
        {m.n && <path d={`M${m.x} 213h${m.w + 3}v3h-${m.w + 3}z`} fill="#777" />}
        {m.n === "0" && <path d="M731 214h60v4h-60z" fill="#000" />}
        {m.c && <path d={`M${m.x + m.w - 22} 213h26v4h-26z`} fill={m.c} />}
        <text x={m.cx} y="241" fill="#fff" fontFamily="Liberation Sans" fontWeight="bold" fontSize="12.600" textAnchor="middle">{m.a}</text>
        <text x={m.cx} y="253" fill="#fff" fontFamily="Liberation Sans" fontWeight="bold" fontSize="12.600" textAnchor="middle">{m.b}</text>
        {m.n && (
          <>
            <path d={`M${m.nx} 213h16.500v22.500h-16.500z`} fill="#fff" stroke="#000" />
            <text x={m.nx + 8} y="229" fontFamily="Liberation Serif" fontSize="16" textAnchor="middle">{m.n}</text>
          </>
        )}
      </g>
    ))}
    {[1013, 1063].map((x) => (
      <g key={x}>
        <path d={`M${x + 44.5} 218h6v13h-6z`} fill="#fff" />
        <path d={`M${x + 0.5} 213v48`} stroke="#777" />
        <circle cx={x + 25.5} cy="219.500" r="5.500" fill="#fff" stroke="#888" />
        <circle cx={x + 25.5} cy="219.500" r="3" fill="#fff" stroke="#666" />
        <path d={`M${x + 10} 236h26v2h-26z`} fill="#9c9c9c" />
        <path d={`M${x + 14} 238h9v23h-9zM${x + 27} 238h9v23h-9z`} fill="#aaa" />
        <path d={`M${x + 15} 241.500h7v20h-7z`} fill="#5d5320" stroke="#0a5bb5" strokeWidth="1.500" />
        <path d={`M${x + 29} 241.500h5v20h-5z`} fill="#6e6420" stroke="#d8cf9a" />
        <path d={`M${x + 18.5} 243v18M${x + 31.5} 243v18`} stroke="#111" strokeWidth="2" strokeDasharray="2 1" />
      </g>
    ))}
    <path d="M1014.500 213h14.500v18h-14.500zM1064 213h16.500v22.500h-16.500z" fill="#fff" stroke="#000" />
    <text x="1020" y="226.500" fontFamily="Liberation Serif" fontSize="16" textAnchor="middle">6</text>
    <text x="1072" y="229" fontFamily="Liberation Serif" fontSize="16" textAnchor="middle">7</text>
    <path d="M1113.500 213v48" stroke="#777" />
    <circle cx="1138.500" cy="219.500" r="5.500" fill="#fff" stroke="#888" />
    <circle cx="1138.500" cy="219.500" r="3" fill="#fff" stroke="#666" />
    <Screw x={1114} y={232} flip />
    <path d="M1145 256.500h12" stroke="#777" />
    <path d="M1149 258h6v3h-6z" fill="#ddd3a8" />
    {[1010.5, 1035.5, 1060.5].map((x) => (
      <path key={x} d={`M${x} 209.500h6v6h-6z`} fill="#b4b4b4" stroke="#000" />
    ))}
    <rect x="566.500" y="275.500" width="23" height="24" rx="3" fill="#fff" stroke="#000" />
    <text x="578" y="292" fontFamily="Liberation Serif" fontSize="16" textAnchor="middle">0</text>
    <path d="M578.500 299.500v143" stroke="#000" />
    <rect x="566.500" y="442.500" width="23" height="24" rx="3" fill="#fff" stroke="#000" />
  </RackSvg>
);

const Divider = ({ kind }: { kind: "open" | "both" | "end" }) => (
  <svg width="8" height="21" viewBox="0 0 8 21">
    {kind === "open" && <><path d="M0 0h2l6 21H0z" fill="#f0f0f0" /><path d="M2 0l6 21V0z" fill="#fff" /><path d="M1.500 0L7 20.500" stroke="#000" fill="none" /></>}
    {kind === "both" && <><path d="M4 .500h4" stroke="#000" /><path d="M1 20.500L5.500 0M3.500 8L7.500 20.500" stroke="#000" fill="none" /></>}
    {kind === "end" && <><path d="M5 .500h3" stroke="#000" /><path d="M1 20.500L5.500 0" stroke="#000" fill="none" /></>}
  </svg>
);
const NavArrow = ({ bar, right }: { bar?: boolean; right?: boolean }) => (
  <svg width="9" height="12" viewBox="0 0 9 12" fill="#9a9a9a">
    <g transform={right ? "translate(9 0) scale(-1 1)" : undefined}>
      <path d="M7.500 1v10L3 6z" />
      {bar && <path d="M0 1h1.500v10H0z" />}
    </g>
  </svg>
);

const menu: [string, number][] = [["File", 23], ["Edit", 26], ["View", 32], ["Services", 53], ["Tools", 36], ["Build", 34], ["Controller", 65], ["Debug", 45], ["Window", 55], ["Help", 32]];

export default function App() {
  return (
    <Screen>
      <Global />
      <TitleBar>
        <TitleLeft>
          <svg width="28" height="22" viewBox="0 0 28 22" fill="none" stroke="#2eb050" strokeWidth="1.700">
            <path d="M6 1.200H3.500Q1 1.200 1 4v13q0 3 2.500 3H6M11 1.200H8.500Q6 1.200 6 4v13q0 3 2.500 3H11M15.500 20H13q-2-.3-2-3V4q0-2.800 2.500-2.800H23Q27 1.200 27 5v11q0 4.500-4 4.500t-3.500-4.500V7Q19.500 4.500 17.800 4.500T16 7v9q0 4 4 4.500" />
          </svg>
          <TitleText>System_1 : Topology 'Controller_1' Refine Online</TitleText>
        </TitleLeft>
        <svg width="216" height="30" viewBox="1687 3.500 216 30" fill="none" stroke="#4a4f53">
          <path d="M1693 14q1-5 7.500-5t6.500 4.500q0 3-4 4.500-2.500 1-2.500 4.500" strokeWidth="4" />
          <circle cx="1699.500" cy="27.500" r="2.600" fill="#4a4f53" stroke="none" />
          <path d="M1726.500 10v17M1805.500 10v17" strokeWidth="1.200" />
          <path d="M1748 25h-11V10h18v6" strokeWidth="1.800" />
          <path d="M1739 14h2M1743 14h8M1739 18h2M1743 18h5M1739 22h2M1743 22h4" strokeWidth="1.500" />
          <path d="M1752.500 14v11" strokeWidth="3" /><path d="M1748 22.500h9l-4.500 5.500z" fill="#4a4f53" stroke="none" />
          <path d="M1774 19h-3.500v8h18v-8h-3.500" strokeWidth="2" strokeLinejoin="round" />
          <path d="M1779.500 9v8" strokeWidth="4.500" /><path d="M1773.500 15h12l-6 7z" fill="#4a4f53" stroke="none" />
          <path d="M1817 18.500h16" strokeWidth="2.800" />
          <path d="M1854 15v-4h11v10h-3M1850 15.500h11v11h-11z" strokeWidth="2.200" />
          <path d="M1881 10l18 18M1899 10l-18 18" strokeWidth="3" />
        </svg>
      </TitleBar>

      <Workspace>
        <SideRail><SideTab>Application Browser</SideTab></SideRail>
        <Body>
          <MenuBar>
            <PlcIcon />
            <MenuItems>{menu.map(([m, w]) => <MenuItem key={m} $w={w}>{m}</MenuItem>)}</MenuItems>
          </MenuBar>
          <ToolArea>
            <ToolBar $indent={110} $w={309}>
              <Grip />
              {[iconCopy, iconCut, iconPaste].map((ic, i) => <ToolBtn key={i}>{ic}</ToolBtn>)}
              <ToolSep />
              {[iconUndo, iconRedo].map((ic, i) => <ToolBtn key={i}>{ic}</ToolBtn>)}
              <ToolSep /><ToolBtn>{iconCheck}</ToolBtn><ToolSep />
              {[iconFind, iconFindNext, iconFindIn].map((ic, i) => <ToolBtn key={i}>{ic}</ToolBtn>)}
              <ToolSep /><ToolBtn>{iconScreen}</ToolBtn><ToolSep /><ToolBtn>{iconDown}</ToolBtn>
            </ToolBar>
            <ToolBar $w={154}>
              <Grip $mr={1} />
              <ToolBtn $on><Hier /></ToolBtn>
              {[iconTree, iconCols, iconRows].map((ic, i) => <ToolBtn key={i}>{ic}</ToolBtn>)}
              <ToolSep /><ToolBtn>{iconZoom}</ToolBtn>
              <Caret width="8" height="5" viewBox="0 0 8 5"><path d="M0 0h8L4 4.500z" fill="#999" /></Caret>
            </ToolBar>
          </ToolArea>

          <Split>
            <Browser>
              <BrowserHead>Project Browser<BrowserClose>x</BrowserClose></BrowserHead>
              <BrowserPanel>
                <ViewHead><Hier />Structural view</ViewHead>
                <TreeFrame><ProjectTree /></TreeFrame>
              </BrowserPanel>
            </Browser>
            <Main>
              <Editor>
                <BusRow>
                  <BusForm>
                    Bus:
                    <BusNumber>0</BusNumber>
                    <Select>BME P58 5040   03.20<Chev d="M1.500 4L6 8.500 10.500 4" w={1.2} /></Select>
                  </BusForm>
                </BusRow>
                <CanvasGrid>
                  <Canvas><RackDrawing /></Canvas>
                  <VBar>
                    <Chev d="M1.500 8.500L6 4l4.500 4.500" />
                    <VThumb />
                    <Chev d="M1.500 4L6 8.500 10.500 4" />
                  </VBar>
                  <HBar>
                    <Chev d="M8 1.500L3.500 6 8 10.500" />
                    <HThumb />
                    <Chev d="M4 1.500L8.500 6 4 10.500" />
                  </HBar>
                </CanvasGrid>
              </Editor>
              <SheetTab><PlcIcon w={17} h={17} />PLC bus</SheetTab>
            </Main>
          </Split>

          <Output>
            <OutputRail>
              <TinyBtn><svg width="7" height="7" viewBox="0 0 7 7"><path d="M1 1l5 5M6 1L1 6" stroke="#000" strokeWidth="1.600" /></svg></TinyBtn>
              <TinyBtn><svg width="5" height="7" viewBox="0 0 5 7"><path d="M1 1l3 2.500L1 6z" fill="#999" /></svg></TinyBtn>
              <RailGrip />
            </OutputRail>
            <OutputMain>
              <OutputText />
              <OutputTabs>
                <NavBtn><NavArrow bar /></NavBtn>
                <NavBtn><NavArrow /></NavBtn>
                <NavBtn><NavArrow right /></NavBtn>
                <NavBtn><NavArrow bar right /></NavBtn>
                <TabStrip>
                  <Divider kind="open" />
                  <OutTab $on $w={106}>Build Changes</OutTab>
                  <Divider kind="both" />
                  <OutTab $w={98}>Import/export</OutTab>
                  <Divider kind="both" />
                  <OutTab $w={85}>User errors</OutTab>
                  <Divider kind="both" />
                  <OutTab $w={104}>FDT log event</OutTab>
                  <Divider kind="both" />
                  <OutTab $w={120}>Search/Replace</OutTab>
                  <Divider kind="end" />
                  <TabsFill />
                </TabStrip>
              </OutputTabs>
            </OutputMain>
          </Output>

          <StatusBar>
            <Ready>Ready</Ready>
            <Flag $w={108}>HMI R/W mode</Flag><Tick $l={1} $r={2} />
            <Flag $w={50}>EQUAL</Flag><Tick $l={1} $r={10} /><Tick $l={0} $r={3} />
            <Flag $w={34}>RUN</Flag><Tick $l={1} $r={2} />
            <Flag $w={122}>UPLOAD INFO OK</Flag><Tick $l={1} $r={2} />
            <Flag $w={141}>TCPIP:182.179.243.21</Flag><Tick $l={8} $r={0} />
            <Tick $l={107} $r={0} /><Tick $l={120} $r={0} /><Tick $l={15} $r={0} /><Tick $l={15} $r={3} />
            <Flag $w={76} $yellow>NOT BUILT</Flag><Tick $l={0} $r={67} /><Tick $l={0} $r={3} />
            <svg width="14" height="18" viewBox="0 0 14 18">
              <path d="M0 0h14v18H0z" fill="#c0c0c0" />
              <path d="M5 12Q1 9 1 6a6 5.500 0 0 1 12 0q0 3-4 6z" fill="#fff" stroke="#000" />
              <path d="M4.500 12.500h5v4h-5zM4.500 14.500h5" fill="#888" stroke="#000" />
            </svg>
            <Tick $l={4} $r={0} /><Tick $l={27} $r={4} />
            <InsLabel>INS</InsLabel>
            <Tick $l={7} $r={0} /><Tick $l={42} $r={10} />
            <svg width="12" height="12" viewBox="0 0 12 12" fill="#b8b8b8"><path d="M8 0h3v3H8zM8 4h3v3H8zM4 4h3v3H4zM8 8h3v3H8zM4 8h3v3H4zM0 8h3v3H0z" /></svg>
          </StatusBar>
        </Body>
      </Workspace>
      <GreenStrip />

      <Taskbar>
        <StartCell>
          <svg width="20" height="20" viewBox="0 0 20 20" fill="#fff"><path d="M0 2.800l8.500-1.200v8H0zM9.500 1.500L20 0v9.600H9.500zM0 10.500h8.500v8L0 17.300zM9.500 10.500H20V20L9.500 18.500z" /></svg>
        </StartCell>
        <Search>
          <svg width="20" height="22" viewBox="0 0 20 22" fill="none" stroke="#222" strokeWidth="1.500"><circle cx="13" cy="8" r="6.300" /><path d="M8.500 12.500L1 20" /></svg>
          <SearchText>Type here to search</SearchText>
          <Brand><BrandGreen>Life Is On<BrandName>Schneider<BrandSub>Electric</BrandSub></BrandName></BrandGreen></Brand>
        </Search>
        <Apps>
          <AppCell $w={60}>
            <svg width="20" height="22" viewBox="0 0 20 22" fill="none" stroke="#fff" strokeWidth="1.500"><path d="M1 1v4h12V1M1 8h12v7H1zM1 21v-3h12v3M17.500 1v4M17.500 11v10" /><path d="M16 6.500h3v3h-3z" fill="#fff" stroke="none" /></svg>
          </AppCell>
          <AppCell $shift={3}>
            <svg width="28" height="26" viewBox="0 0 28 26"><path d="M0 2q0-2 2-2h9l3 3v5H0z" fill="#e8a200" /><path d="M0 4h25q3 0 3 3v17H0z" fill="#ffd35c" /><path d="M5 25v-9q0-3 3-3h12q3 0 3 3v9h-5v-5h-8v5z" fill="#2f8fe0" /></svg>
          </AppCell>
          <AppCell>
            <svg width="30" height="30" viewBox="0 0 30 30"><circle cx="15" cy="15" r="15" fill="#34a853" /><path d="M2 7.500A15 15 0 0 1 28 7.500L15 8 9 18z" fill="#ea4335" /><path d="M28 7.500A15 15 0 0 1 14 30L21.500 18 20 8.500z" fill="#fbbc05" /><path d="M2 7.500L8.500 18.500l6 4L14 30A15 15 0 0 1 2 7.500" fill="#34a853" /><circle cx="15" cy="15" r="7.500" fill="#fff" /><circle cx="15" cy="15" r="5.600" fill="#4285f4" /></svg>
          </AppCell>
          <AppCell>
            <svg width="28" height="28" viewBox="0 0 28 28"><path d="M0 0h28v28H0z" fill="#4fe3ea" /><g transform="translate(2 2)"><Gear s={24} /></g></svg>
            <Underline />
          </AppCell>
          <AppCell>
            <svg width="28" height="26" viewBox="0 0 30 28"><path d="M1 5l8-3v20l-8-3z" fill="#aeb3b8" /><path d="M5 3l20-3 4 15-20 5z" fill="#e4e7ea" stroke="#99a" /><path d="M8 5l15-2 3 10-15 4z" fill="#8db4c8" /><path d="M9 12l4-1 1-5 2 8 2-6 2 4 5-1" stroke="#f4ffff" fill="none" strokeWidth="1.300" /><path d="M12 20l10-2 2 6-5 3-8-2z" fill="#d6d8da" /><path d="M3 20l8 2v3l-8-2z" fill="#888" /></svg>
            <Underline />
          </AppCell>
          <AppCell>
            <svg width="32" height="30" viewBox="0 0 32 30"><ellipse cx="16" cy="15" rx="16.500" ry="13" fill="#0a9b3a" transform="rotate(-38 16 15)" /><path d="M23 8q-9-2-7 4 1 6-1 8-3 2-8 1" stroke="#fff" strokeWidth="4.500" fill="none" /><path d="M3 13h8M3 17h7M21 13h8M21 17h7" stroke="#fff" strokeWidth="1.800" /></svg>
            <Underline $split />
          </AppCell>
          <AppCell>
            <svg width="28" height="23" viewBox="0 0 28 23"><path d="M.500.500h27v22H.500z" fill="#0a0a0a" stroke="#9aa0a6" /><path d="M1 1h26v2.500H1z" fill="#cfd3d6" /><path d="M2 4h24v4Q8 10 2 18z" fill="#3a3a3a" /><path d="M4 7h2M7 6v3M9 7l2 2M12 9h4" stroke="#ddd" /></svg>
            <Underline />
          </AppCell>
        </Apps>
        <Tray>
          <svg width="30" height="26" viewBox="0 0 30 26">
            <defs><linearGradient id="sun" x1="0" x2="0" y1="0" y2="1"><stop offset="0" stopColor="#ffc928" /><stop offset="1" stopColor="#f0700c" /></linearGradient></defs>
            <circle cx="15" cy="13" r="12.500" fill="url(#sun)" />
            <path d="M6 5h10M3 10h11M0 16h12M2 21h14M10 13h12" stroke="#ffe2ae" strokeWidth="1.800" />
            <circle cx="22.500" cy="7.500" r="7.300" fill="#c42b1c" />
            <text x="22.500" y="11.500" fill="#fff" fontFamily="Open Sans" fontSize="11" textAnchor="middle">1</text>
          </svg>
          <Temp>23°C  Haze</Temp>
          <TrayIcons>
            <svg width="16" height="10" viewBox="0 0 16 10" fill="none" stroke="#fff" strokeWidth="1.400"><path d="M.7 8.500L8 1.200l7.300 7.300" /></svg>
            <svg width="20" height="17" viewBox="0 0 20 17" fill="none" stroke="#fff" strokeWidth="1.300"><path d="M6 1.500h13.300v10.500H4V7M12 12v3.500M7.500 16h9M.7 1h3.600v3.500H.7zM2.500 4.500V8" /></svg>
            <svg width="21" height="18" viewBox="0 0 21 18" fill="none" stroke="#fff" strokeWidth="1.300"><path d="M.7 6.500h3L7.500 3v12L3.700 11.500h-3zM10.500 6.500q1.500 2.500 0 5M13.500 4q3 5 0 10M16.500 1.500q4.500 7.500 0 15" /></svg>
          </TrayIcons>
          <Lang>ENG</Lang>
          <Clock>10:39{"\n"}19-11-2024</Clock>
          <Bell width="32" height="30" viewBox="0 0 32 30">
            <path d="M1 1h20v15H11l-3 3v-3H1z" fill="#fff" />
            <path d="M4 5h13M4 8.500h13M4 12h9" stroke="#1e1e1e" strokeWidth="1.400" />
            <circle cx="20" cy="20" r="9.500" fill="#2d2d2d" stroke="#999" />
            <text x="20" y="25" fill="#fff" fontFamily="Open Sans" fontWeight="600" fontSize="13.500" textAnchor="middle">1</text>
          </Bell>
        </Tray>
      </Taskbar>

      <Recorder>
        <RecorderIcon><Gear s={25} /></RecorderIcon>
        <RecorderSep />
        <Block $w={7} /><Block $w={7} $ml={2} /><Block $w={16} $ml={10} />
      </Recorder>
      <Balloon>
        <BalloonLine $top>Stopping...</BalloonLine>
        <BalloonLine>TestComplete</BalloonLine>
        <BalloonTail width="9" height="8" viewBox="0 0 9 8"><path d="M1 7.500L7.500 0v7.500" fill="#fff" stroke="#767676" /></BalloonTail>
      </Balloon>

      <Progress>
        <ProgressTitle>PLC</ProgressTitle>
        <Meter><MeterFill /></Meter>
      </Progress>
      <Dialog>
        <DialogTitle>
          Properties of device
          <svg width="13" height="13" viewBox="0 0 13 13"><path d="M.500.500l12 12M12.500.500l-12 12" stroke="#888" strokeWidth="1.100" /></svg>
        </DialogTitle>
        <DialogTabs>
          <DialogTab $w={64} $on>General</DialogTab>
          <DialogTab $w={121} $ls={0.03}>Device information</DialogTab>
          <DialogTab $w={110} $ls={0.03}>DTM information</DialogTab>
          <DialogTab $w={129} $ls={0.05}>Protocol information</DialogTab>
        </DialogTabs>
        <DialogPage>
          <Group>
            <Legend>DTM name management</Legend>
            <FieldLabel>Name :</FieldLabel>
            <Field>BME_NOC0301</Field>
          </Group>
        </DialogPage>
        <DialogButtons>
          <Button>OK</Button>
          <Button>Cancel</Button>
          <Button>Help</Button>
        </DialogButtons>
      </Dialog>

      <Watermark>
        <WatermarkTitle>Activate Windows</WatermarkTitle>
        Go to Settings to activate Windows.
      </Watermark>
      <Pointer width="16" height="24" viewBox="0 0 16 24"><path d="M1 1v18l4.200-4 3 6.500 3-1.300-3-6.200h5.800z" fill="#fff" stroke="#223" strokeWidth="1.100" /></Pointer>
    </Screen>
  );
}
